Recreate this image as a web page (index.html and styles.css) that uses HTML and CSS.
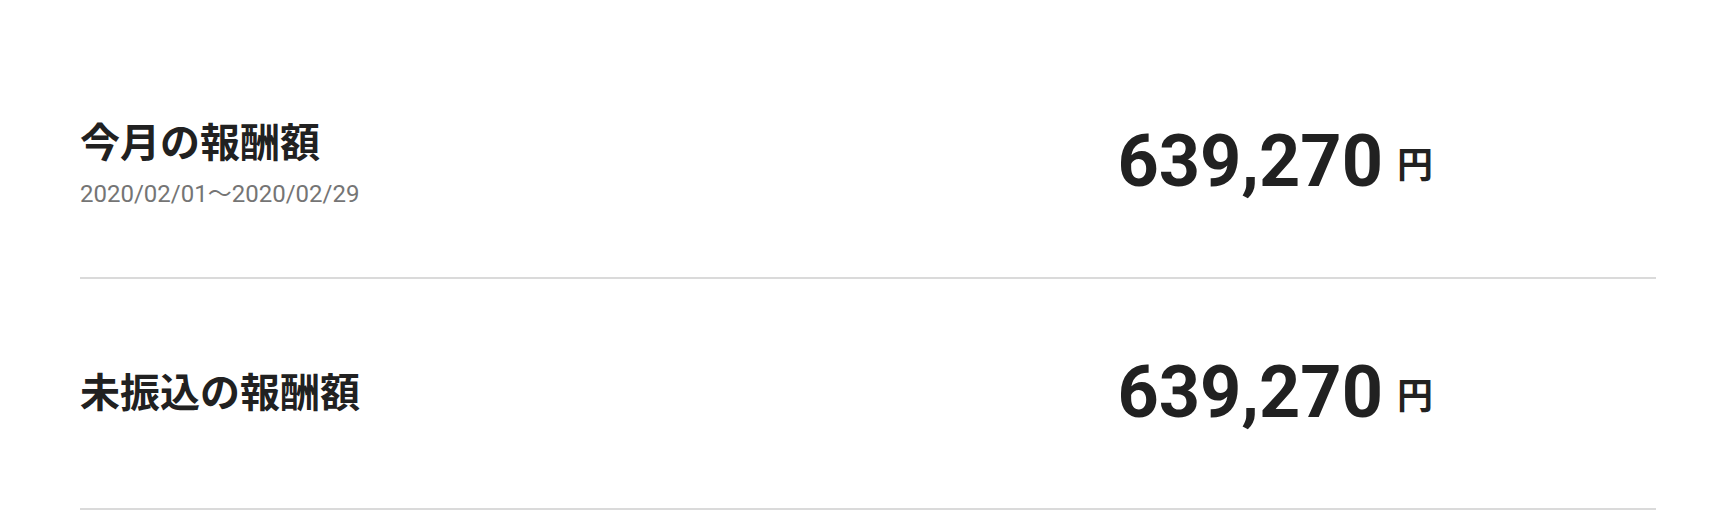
FILE: index.html
```html
<!DOCTYPE html>
<html lang="ja">
<head>
<meta charset="UTF-8">
<meta name="viewport" content="width=device-width, initial-scale=1.0">
<title>報酬額</title>
<link rel="stylesheet" href="styles.css">
</head>
<body>

<div class="reward-list">

  <div class="reward-row">
    <div class="reward-label">
      <div class="reward-title">今月の報酬額</div>
      <div class="reward-period">2020/02/01〜2020/02/29</div>
    </div>
    <div class="reward-value">
      <span class="amount">639,270</span>
      <span class="unit">円</span>
    </div>
  </div>

  <div class="reward-row">
    <div class="reward-label">
      <div class="reward-title">未振込の報酬額</div>
    </div>
    <div class="reward-value">
      <span class="amount">639,270</span>
      <span class="unit">円</span>
    </div>
  </div>

</div>

</body>
</html>
```

FILE: styles.css
```css
body {
    margin: 0;
    font-family: Roboto, "Noto Sans CJK JP", sans-serif;
    background: #ffffff;
    color: #212121;
}

.reward-list {
    margin: 0 72px 0 80px;
    padding-top: 48px;
}

.reward-row {
    display: flex;
    align-items: center;
    justify-content: space-between;
    height: 229px;
    border-bottom: 2px solid #dadada;
}

.reward-title {
    font-size: 40px;
    line-height: 1.5;
    font-weight: bold;
}

.reward-period {
    margin-top: 2px;
    font-size: 24px;
    line-height: 1.5;
    color: #757575;
}

.reward-value {
    display: flex;
    align-items: center;
    padding-right: 223px;
}

.amount {
    font-size: 72px;
    font-weight: bold;
    line-height: 1.2;
}

.unit {
    margin-left: 14px;
    font-size: 36px;
    font-weight: bold;
    font-family: "Noto Sans CJK JP", sans-serif;
}
```
